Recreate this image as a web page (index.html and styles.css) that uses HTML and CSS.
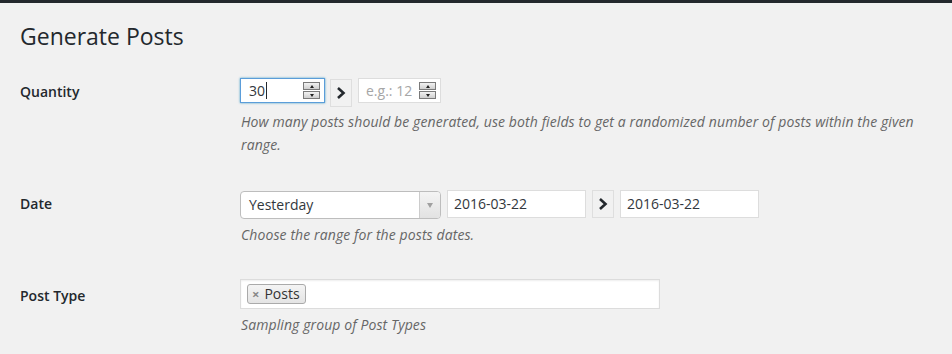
FILE: index.html
```html
<!DOCTYPE html>
<html>
<head>
<meta charset="utf-8">
<link rel="stylesheet" href="styles.css">
</head>
<body>
<div class="topbar"></div>
<div class="wrap">
  <h1 class="title">Generate Posts</h1>
  <div class="form">
    <div class="row">
      <div class="label">Quantity</div>
      <div class="field">
        <div class="controls">
          <div class="numbox focus">
            <span class="val">30</span><span class="caret"></span>
            <span class="spin"><span class="up"></span><span class="down"></span></span>
          </div>
          <span class="arrowbtn small"><svg width="10" height="14" viewBox="0 0 10 14"><polyline points="2,2 7.5,7 2,12" fill="none" stroke="#23282d" stroke-width="2.6"/></svg></span>
          <div class="numbox second">
            <span class="ph">e.g.: 12</span>
            <span class="spin"><span class="up"></span><span class="down"></span></span>
          </div>
        </div>
        <p class="desc desc-qty">How many posts should be generated, use both fields to get a randomized number of posts within the given range.</p>
      </div>
    </div>
    <div class="row">
      <div class="label">Date</div>
      <div class="field">
        <div class="controls">
          <div class="select">
            <span class="sel-text">Yesterday</span>
            <span class="sel-arrow"><span class="tri"></span></span>
          </div>
          <div class="datebox">2016-03-22</div>
          <span class="arrowbtn"><svg width="10" height="14" viewBox="0 0 10 14"><polyline points="2,2 7.5,7 2,12" fill="none" stroke="#23282d" stroke-width="2.6"/></svg></span>
          <div class="datebox">2016-03-22</div>
        </div>
        <p class="desc desc-date">Choose the range for the posts dates.</p>
      </div>
    </div>
    <div class="row">
      <div class="label">Post Type</div>
      <div class="field">
        <div class="multi">
          <span class="tag"><span class="x">×</span>Posts</span>
        </div>
        <p class="desc desc-type">Sampling group of Post Types</p>
      </div>
    </div>
  </div>
</div>
</body>
</html>
```
FILE: styles.css
```css
html, body {
  margin: 0;
  padding: 0;
  background: #f1f1f1;
  font-family: "Open Sans", "Liberation Sans", sans-serif;
  color: #23282d;
  height: 354px;
  overflow: hidden;
}
.topbar {
  height: 3px;
  background: #23282d;
}
.wrap {
  padding: 0 20px;
}
.title {
  font-size: 23px;
  font-weight: 400;
  line-height: 29px;
  margin: 19px 0 0 0;
  color: #23282d;
}
.form {
  margin-top: 12px;
}
.row {
  display: flex;
}
.label {
  width: 200px;
  padding: 20px 10px 20px 0;
  font-size: 14px;
  font-weight: 600;
  line-height: 18px;
  color: #23282d;
}
.field {
  flex: 1;
  padding: 15px 10px;
}
.controls {
  display: flex;
  align-items: flex-start;
  gap: 6px;
}
.numbox {
  box-sizing: border-box;
  width: 85px;
  height: 25px;
  background: #fff;
  border: 1px solid #ddd;
  display: flex;
  align-items: center;
  padding: 0 4px 0 8px;
  font-size: 14px;
  color: #32373c;
}
.numbox.focus {
  border-color: #5b9dd9;
  box-shadow: 0 0 2px rgba(30, 140, 190, .8);
  margin-right: -1px;
}
.numbox.second {
  width: 83px;
  padding-left: 7px;
}
.val {
  line-height: 20px;
}
.caret {
  width: 1px;
  height: 17px;
  background: #23282d;
  margin-left: 1px;
}
.ph {
  color: #a6a6a6;
  line-height: 20px;
}
.spin {
  margin-left: auto;
  width: 17px;
  height: 17px;
  display: flex;
  flex-direction: column;
  gap: 1px;
}
.spin .up, .spin .down {
  flex: 1;
  box-sizing: border-box;
  border: 1px solid #7a7a7a;
  background: linear-gradient(#f2f2f2, #cfcfcf);
  display: flex;
  align-items: center;
  justify-content: center;
}
.spin .up::after {
  content: "";
  border-left: 2.5px solid transparent;
  border-right: 2.5px solid transparent;
  border-bottom: 3px solid #222;
}
.spin .down::after {
  content: "";
  border-left: 2.5px solid transparent;
  border-right: 2.5px solid transparent;
  border-top: 3px solid #222;
}
.arrowbtn {
  box-sizing: border-box;
  width: 22px;
  height: 28px;
  border: 1px solid #dedede;
  background: #f1f1f1;
  display: flex;
  align-items: center;
  justify-content: center;
}
.arrowbtn.small {
  margin-top: 1px;
}
.select {
  box-sizing: border-box;
  width: 201px;
  height: 28px;
  margin-top: 1px;
  border: 1px solid #bdbdbd;
  border-radius: 4px;
  background: #fff;
  display: flex;
  overflow: hidden;
}
.sel-text {
  flex: 1;
  padding-left: 8px;
  font-size: 14px;
  line-height: 26px;
  color: #32373c;
}
.sel-arrow {
  width: 20px;
  border-left: 1px solid #ccc;
  background: linear-gradient(#f4f4f4, #e2e2e2);
  display: flex;
  align-items: center;
  justify-content: center;
}
.tri {
  border-left: 3.5px solid transparent;
  border-right: 3.5px solid transparent;
  border-top: 5px solid #a0a0a0;
}
.datebox {
  box-sizing: border-box;
  width: 139px;
  height: 28px;
  background: #fff;
  border: 1px solid #ddd;
  padding-left: 6px;
  font-size: 14px;
  line-height: 26px;
  color: #32373c;
}
.multi {
  box-sizing: border-box;
  width: 420px;
  height: 30px;
  margin-top: -3px;
  background: #fff;
  border: 1px solid #dcdcdc;
  box-shadow: inset 0 1px 2px rgba(0, 0, 0, .07);
  padding: 4px 6px;
  display: flex;
  align-items: flex-start;
}
.tag {
  box-sizing: border-box;
  height: 20px;
  border: 1px solid #aaa;
  border-radius: 3px;
  background: linear-gradient(#f4f4f4, #e4e4e4);
  padding: 0 5px 0 4px;
  font-size: 14px;
  line-height: 18px;
  color: #333;
  display: flex;
  align-items: center;
}
.tag .x {
  color: #888;
  font-weight: 700;
  font-size: 13px;
  margin-right: 5px;
}
.desc {
  margin: 3px 0 4px 1px;
  font-size: 14px;
  font-style: italic;
  line-height: 23px;
  letter-spacing: 0.1px;
  color: #666;
}
.desc-date {
  margin-top: 4px;
  margin-bottom: 6px;
}
.desc-type {
  margin-top: 4px;
  margin-bottom: 0;
}
```
